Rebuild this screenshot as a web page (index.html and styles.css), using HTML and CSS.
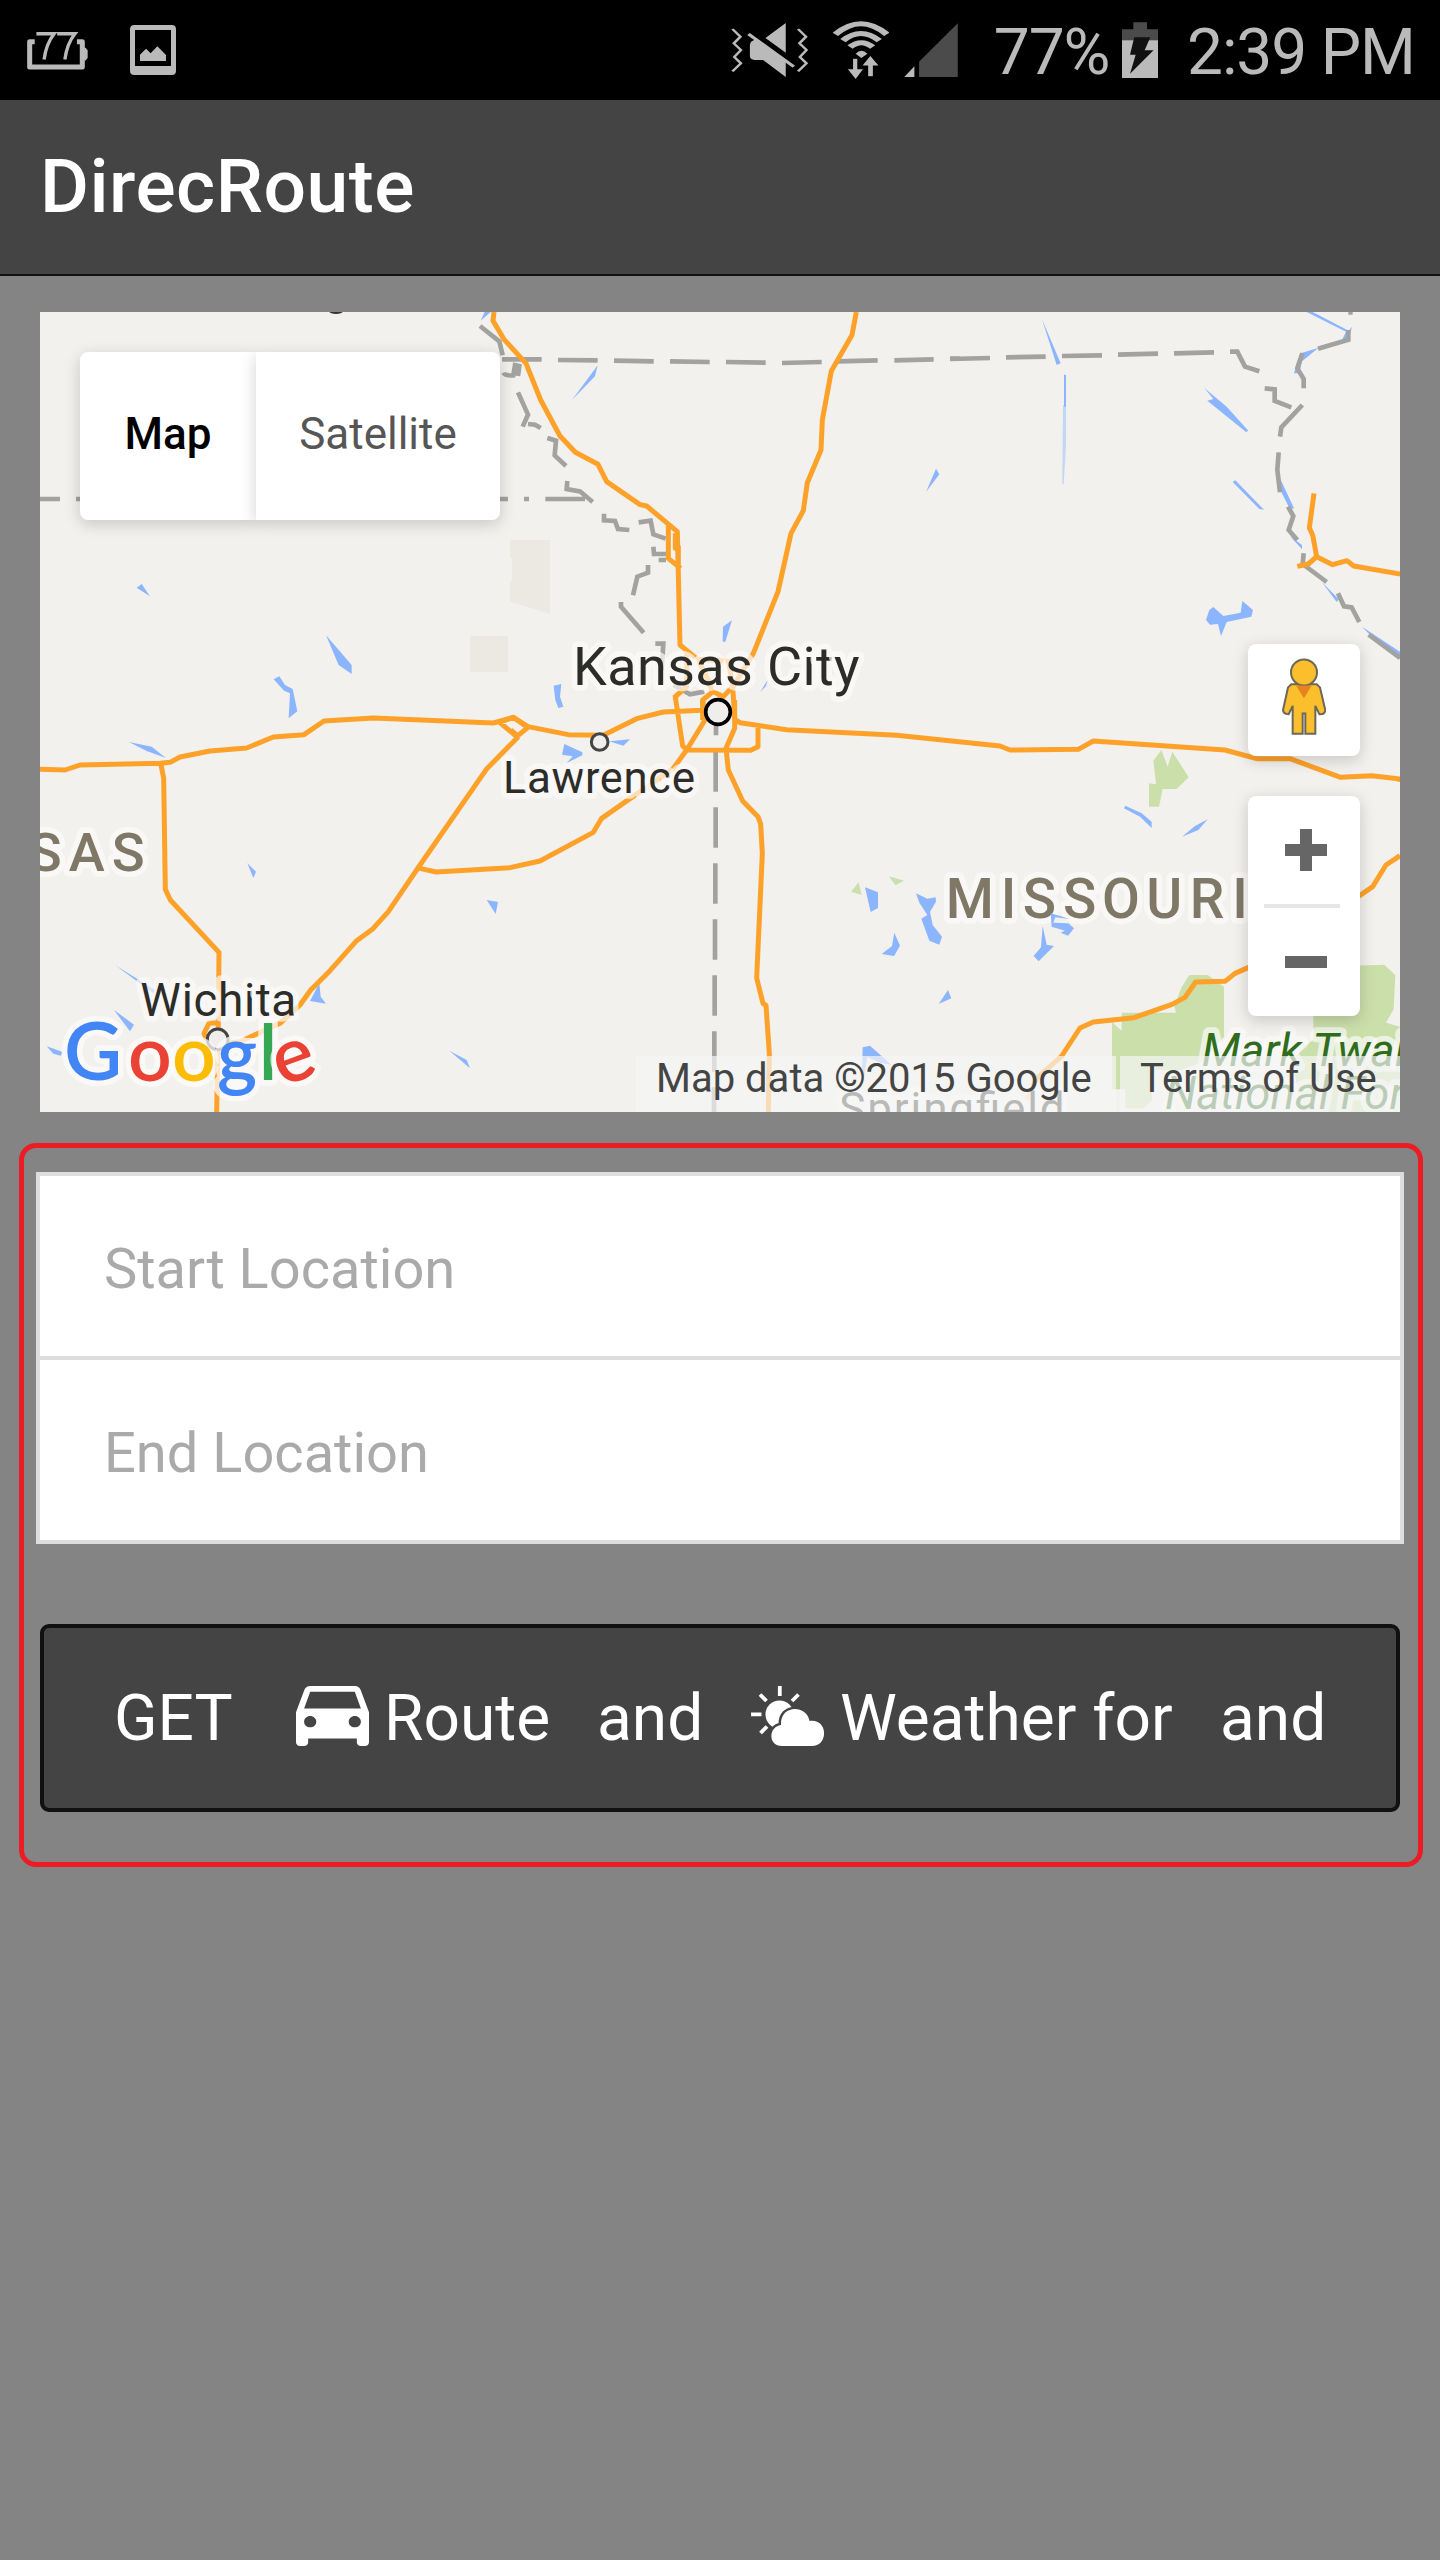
FILE: index.html
```html
<!DOCTYPE html>
<html lang="en">
<head>
<meta charset="utf-8">
<title>DirecRoute</title>
<link rel="stylesheet" href="styles.css">
</head>
<body>
<div class="status">
  <svg class="ic-pct" viewBox="80 92 182 116"><path d="M103 124H88V199H245V124H229" fill="none" stroke="#bababa" stroke-width="15" stroke-linejoin="round"/><path d="M250 142h5l6 8v22l-6 8h-5z" fill="#bababa"/><path d="M108 100H161Q137 130 131 177M170 100H223Q199 130 193 177" fill="none" stroke="#bababa" stroke-width="10"/></svg>
  <svg class="ic-img" viewBox="390 75 138 150"><path fill="#bababa" fill-rule="evenodd" d="M403 75H515Q528 75 528 88V212Q528 225 515 225H403Q390 225 390 212V88Q390 75 403 75ZM405 90V198H513V90Z"/><path fill="#bababa" d="M420 183V164L438 146L452 160L472 139L498 165V183Z"/></svg>
  <svg class="ic-mute" viewBox="66 66 164 166" preserveAspectRatio="none"><g fill="none" stroke="#bababa" stroke-width="6"><path d="M69 87L86 110L72 130L87 150L73 171L87 190L69 214M208 87L225 110L211 130L226 150L212 171L226 190L208 214"/></g><path fill="#bababa" d="M182 69V158L139 114ZM108 126L118 117L182 182V231L134 180H116Q106 178 106 168V135Z"/><path d="M103 102L199 200" stroke="#bababa" stroke-width="8"/></svg>
  <svg class="ic-wifi" viewBox="282 58 118 180" preserveAspectRatio="none"><g fill="none" stroke="#bababa" stroke-width="15"><path d="M287 101Q341 37 396 101"/><path d="M303 120Q341 77 380 120"/><path d="M318 139Q342 113 366 139"/></g><path fill="#bababa" d="M330 159Q342 142 355 159L342 172Z"/><path fill="#bababa" stroke="#000" stroke-width="3" d="M323 173H335V204H348L330 238L311 204H323ZM355 228H368V196H381L361 163L342 196H355Z"/></svg>
  <svg class="ic-signal" viewBox="432 68 116 164" preserveAspectRatio="none"><path fill="#4b4b4b" d="M546 69V231H464V184Z"/><path fill="#bababa" d="M454 198V231H432Z"/></svg>
  <span class="status-text pct">77%</span>
  <svg class="ic-batt" viewBox="896 62 77 170" preserveAspectRatio="none"><path fill="#4b4b4b" d="M920 63H949V84H973V118H896V84H920Z"/><path fill="#bababa" d="M896 117H973V231H896Z"/><path fill="#111" d="M922 108H956L944 147H963L913 217L925 160H913Z"/></svg>
  <span class="status-text clock">2:39 PM</span>
</div>
<header class="header"><h1>DirecRoute</h1></header>
<main class="content">
  <section class="map">
    <svg class="map-canvas" viewBox="120 936 4080 2400">
      <!-- land cover -->
      <g fill="#ebe9e1"><path d="M1530 1620h120v222l-120-37v-60l6-4v-66l-6-4zM1410 1908h114v108h-114z"/></g>
      <g fill="#cbdfab" transform="translate(2820 2100)">
        <path d="M664 150L683 200L697 155L746 232L710 267H668L657 320H627V250L648 253L640 182Z"/>
        <path d="M748 825H803L852 860V1010L780 1090L720 1110H636V1200L610 1225H556V1168H516V967L545 992V938H708L703 918L725 862Z"/>
        <path d="M1240 797L1333 794L1366 826L1361 928L1338 968L1380 980V1236H1080L1060 1080L1090 1040L1120 1020V940Z"/>
      </g>
      <g fill="#cbdfab" transform="translate(1380 2100)"><path d="M1173 575L1196 547L1205 585ZM1287 529L1332 542L1306 556Z"/></g>
      <!-- lakes and rivers -->
      <g fill="#8cb5ff">
        <path transform="translate(0 900)" d="M410 863L425 852L450 889ZM978 1006L1055 1095V1122L1016 1095ZM821 1138L838 1129L855 1155L878 1167L892 1234L866 1255L870 1180L852 1172Z"/>
        <path transform="translate(1380 900)" d="M62 62L74 36H92ZM336 300L413 196L405 229ZM1398 576L1428 506L1438 523ZM789 980L816 961L796 1025H788ZM281 1157L304 1152L300 1190L310 1220L295 1224L286 1200ZM900 1177L923 1140L918 1158Z"/>
        <path transform="translate(2820 900)" d="M306 58L362 190L350 195ZM793 264L860 320L925 392L918 396L802 302L820 297ZM878 546L886 541L972 629L958 627ZM1100 36H1118L1226 92L1236 80L1226 120L1205 122L1218 95ZM1082 160L1136 143L1086 184L1078 220H1062L1070 190ZM1020 535L1062 625L1050 628L1022 572ZM1050 709L1086 735V748ZM1145 845L1196 898L1190 906ZM1266 980L1380 1055V1078L1300 1015ZM808 930L820 921L850 948L902 938L907 903L939 930L934 950L860 966L843 1008L834 972L810 974L798 960Z"/>
        <path transform="translate(2820 900)" d="M372 224H378V320H372Z"/>
        <path transform="translate(2820 900)" opacity=".45" d="M369 315H378V435L371 552H367Z"/>
        <path transform="translate(0 2100)" d="M387 126L455 140L498 174L440 153ZM742 490L768 515L760 534ZM1460 600L1494 606L1487 642ZM342 930L402 974L390 994ZM345 795L465 870L460 880ZM140 1039L188 1056L182 1067L160 1061ZM958 850L962 890L978 911L930 903ZM1348 1052L1400 1080L1410 1105Z"/>
        <path transform="translate(1380 2100)" d="M313 132L367 157V166L320 189L338 169L306 164ZM448 124L510 118L490 137ZM1215 562L1254 577V624L1232 636ZM1368 580L1402 596L1427 592L1428 605L1410 635L1418 675L1446 710L1438 734L1408 722L1384 656L1402 645L1378 608ZM1303 698L1320 737L1302 768L1265 762L1296 738ZM1464 870L1474 895L1436 912ZM1208 1042L1230 1037L1295 1095L1260 1088L1222 1070L1212 1130L1206 1110Z"/>
        <path transform="translate(2820 2100)" d="M552 325L556 317L605 340L635 365V384L600 350ZM726 410L765 378L803 358L775 390ZM308 678L320 734L342 738L296 784L281 768L303 742Z"/>
      </g>
      <!-- state borders -->
      <g fill="none" stroke="#a2a2a0" stroke-width="14">
        <path transform="translate(0 900)" d="M120 597H180M228 597H250"/>
        <path transform="translate(1380 900)" d="M60 78L118 124L128 166M126 178H245M294 180L413 181M462 182L581 184M630 184L749 186M798 186L917 188M966 189L1085 186M1134 184L1253 181M1303 181L1421 178M1470 176H1500M131 218Q134 228 160 226L165 195L178 198L174 228M174 277L204 344L188 380M204 372L225 374L242 384M262 414L288 422L284 466L318 498M322 543L320 567L360 574L398 606M120 597H144M192 597H207M256 597H375M432 641V661L465 663L474 687L508 690M536 667L572 662L580 703L617 716M580 740L582 762H620M596 780H618M564 795V818L532 830L519 886M483 906V920L551 998M586 1031H610L605 1110M640 1155L690 1183L733 1175"/>
        <path transform="translate(2820 900)" d="M30 177L150 174M198 172L317 170M366 168L486 166M534 164L654 161M702 160L822 157M870 155H892L915 200L958 214M974 265L1004 268V303L1054 322M1087 315L1024 382L1020 410M1016 457L1012 510L1020 577M1091 265V237L1072 205L1087 160M1134 146L1225 119V90M1225 37H1238M1044 620L1060 648L1046 690L1072 720M1091 760L1088 792L1160 846M1194 880L1212 919L1235 922L1258 966M1286 1004L1380 1074"/>
        <path transform="translate(1380 2100)" d="M768 70V106M767 155V275M767 322V443M766 490V611M765 658V779M764 826V947M763 994V1115M762 1162V1236"/>
      </g>
      <!-- interstates -->
      <g fill="none" stroke="#fda129" stroke-width="15" stroke-linejoin="round">
        <path transform="translate(1380 900)" d="M102 36L99 62L132 118L198 190L242 300L300 408L346 457L414 493L440 545L540 614L560 618L652 695L660 1035L713 1078L806 1084L818 1160L790 1190L755 1172L745 1140L713 1078M625 678V775L662 805M646 700V745L655 740V800M1189 36L1176 105L1114 213L1087 360L1083 450L1042 548L1030 632L993 700L954 875L880 1060L818 1162M680 1060V1160L648 1188L646 1200M755 1178L728 1200V1260M818 1160L824 1250"/>
        <path transform="translate(2820 900)" d="M1122 580L1108 684L1118 705L1130 770L1105 792L1072 799M1130 770L1178 794L1221 782L1241 798L1385 823"/>
        <path transform="translate(0 2100)" d="M118 208L195 210L240 195L482 190L510 187L540 171L630 153L740 144L820 111L912 104L972 63L1120 54L1480 69L1540 52L1582 82M482 190L491 235L496 568L511 600L657 757L655 970L650 1236M1555 110L1459 208L1260 495L1165 635L1117 688L1068 724L990 812L932 870L900 915L840 970L720 1025L680 1030M1260 505L1308 516L1530 503L1620 483L1780 397L1805 355L2020 205L2060 150M655 970L628 968L612 1000L620 1020"/>
        <path transform="translate(1380 2100)" d="M118 66L170 110L204 82M120 66L160 52L204 80L325 104L430 106L530 56L610 36L740 30M728 0L735 60L680 150M645 -15L668 138L682 150L872 151L894 140V80M824 0V85L798 145L805 210L848 303L894 350L902 372L907 460L890 834L909 910L918 916L928 1060L925 1236M820 55L840 68L980 89L1310 106L1620 138L1650 150L1855 148L1900 123L2295 150L2390 176H2490L2642 232L2736 227L2820 237M152 90L170 105"/>
        <path transform="translate(2820 2100)" d="M1380 236V245M1380 467L1338 495L1298 560L1240 600L1110 740L924 803L885 820L855 844L767 846L735 892L696 913L582 953L460 966L420 984L365 1068L290 1135L260 1200"/>
      </g>
      <!-- city markers and place labels -->
      <g class="city">
        <ellipse cx="1008" cy="934" rx="20" ry="8" fill="#333"/>
        <circle cx="2154" cy="2136" r="37" fill="#efeeec" stroke="#000" stroke-width="11"/>
        <circle cx="1799" cy="2226" r="25" fill="#efeeec" stroke="#444" stroke-width="9"/>
        <circle cx="653" cy="3118" r="31" fill="#efeeec" stroke="#444" stroke-width="9"/>
        <text x="1719" y="2055" font-size="162" textLength="860">Kansas City</text>
        <text x="1509" y="2380" font-size="132" textLength="576">Lawrence</text>
        <text x="421" y="3048" font-size="138" textLength="468">Wichita</text>
        <text x="2518" y="3372" font-size="132" textLength="676">Springfield</text>
      </g>
      <g class="state">
        <text x="86" y="2613" font-size="163">S</text><text x="206" y="2613" font-size="163">A</text><text x="335" y="2613" font-size="163">S</text>
        <text y="2753" font-size="165" x="2837 3002 3068 3189 3306 3439 3569 3697">MISSOURI</text>
      </g>
      <path transform="translate(2820 2100)" fill="#8cb5ff" d="M332 640L390 657L346 652L340 668L385 670L402 685L384 707L362 698L375 692L335 680Z"/>
      <g class="park">
        <text x="3605" y="3197" font-size="137">Mark Twain</text>
        <text x="3495" y="3328" font-size="136">National Forest</text>
      </g>
      <g class="logo" font-size="230">
        <text class="blue" x="192" y="3240" font-size="240">G</text><text class="red" x="384" y="3243">o</text><text class="yellow" x="516" y="3243">o</text><text class="blue" x="651" y="3243">g</text><text class="green" x="776" y="3240">l</text><text class="red" x="822" y="3243" transform="rotate(-20 884 3186)">e</text>
      </g>
    </svg>
    <div class="map-types"><button class="type active">Map</button><button class="type">Satellite</button></div>
    <div class="map-tools">
      <div class="pegman"><svg viewBox="1026 1072 132 230"><g fill="#fbbf2d" stroke="#6c6858" stroke-width="6"><path d="M1054 1150H1130L1140 1160L1156 1228Q1154 1242 1138 1240L1126 1215V1299H1096V1238H1088V1299H1058V1215L1046 1240Q1030 1240 1029 1228L1044 1160Z"/><circle cx="1092" cy="1115" r="39"/></g><path fill="#e6831c" d="M1068 1154H1115L1092 1192Z"/></svg></div>
      <div class="zoom"><svg viewBox="0 0 112 220"><path fill="#666" d="M52 33h12v15h15v12H64v15H52V60H37V48h15zM37 160h42v12H37z"/><path fill="#e6e6e6" d="M16 108h76v4H16z"/></svg></div>
    </div>
    <div class="credits"><span class="credit data">Map data ©2015 Google</span><span class="credit terms">Terms of Use</span></div>
  </section>
  <section class="panel">
    <div class="fields"><input type="text" placeholder="Start Location"><input type="text" placeholder="End Location"></div>
    <button class="get">
      <span class="w-get">GET</span>
      <svg class="ic-car" viewBox="3 5 18 16" preserveAspectRatio="none"><path fill="#fff" d="M18.92 6.01C18.72 5.42 18.16 5 17.5 5h-11c-.66 0-1.21.42-1.42 1.01L3 12v8c0 .55.45 1 1 1h1c.55 0 1-.45 1-1v-1h12v1c0 .55.45 1 1 1h1c.55 0 1-.45 1-1v-8l-2.08-5.99zM6.5 16C5.67 16 5 15.330 5 14.500S5.670 13 6.500 13 8 13.670 8 14.500 7.330 16 6.500 16zM17.500 16C16.670 16 16 15.330 16 14.500S16.670 13 17.500 13 19 13.670 19 14.500 18.330 16 17.500 16zM5 11l1.500-4.500h11L19 11H5z"/></svg>
      <span class="w-route">Route</span>
      <span class="w-and">and</span>
      <svg class="ic-sun" viewBox="0 0 73 60"><circle cx="28.500" cy="28.500" r="14" fill="#fff"/><path stroke="#fff" stroke-width="3.800" d="M28.800 0V10M0 28.300H10.500M9 8.500L15.500 15M47.500 8.500L41 15M9.500 47L16 40.500"/><path fill="#fff" stroke="#444" stroke-width="5" paint-order="stroke" d="M31 60C17 60 17 41 30 39C29 18 56 19 58.500 35C77 32 78 60 61 60Z"/></svg>
      <span class="w-weather">Weather for</span>
      <span class="w-and2">and</span>
    </button>
  </section>
</main>
</body>
</html>
```
FILE: styles.css
```css
* { box-sizing: border-box; }
body { margin: 0; width: 1440px; height: 2560px; background: #848484; font-family: Roboto, "Liberation Sans", sans-serif; overflow: hidden; }
svg { display: block; flex: none; }
button { font-family: inherit; }

.status { height: 100px; background: #000; display: flex; align-items: center; }
.status-text { color: #bababa; font-size: 64px; line-height: 100px; white-space: nowrap; padding-top: 6px; letter-spacing: -1.1px; }
.ic-pct { width: 61px; height: 39px; margin-left: 27px; }
.ic-img { width: 46px; height: 50px; margin-left: 42px; }
.ic-mute { width: 77.400px; height: 55.300px; margin-left: 555px; }
.ic-wifi { width: 55.700px; height: 60px; margin-left: 25px; }
.ic-signal { width: 54.700px; height: 54.700px; margin-left: 15px; }
.pct { width: 128px; margin-left: 35px; }
.ic-batt { width: 36.300px; height: 56.700px; }
.clock { margin-left: 29px; }

.header { height: 176px; background: #444; border-bottom: 2px solid #111; padding: 0 0 2px 40px; display: flex; align-items: center; }
.header h1 { margin: 0; color: #fff; font-size: 75px; font-weight: 500; line-height: 88px; letter-spacing: .5px; }

.content { padding-top: 36px; }
.map { position: relative; width: 1360px; height: 800px; margin: 0 40px; background: #f2f1ed; overflow: hidden; }
.map-canvas { width: 1360px; height: 800px; font-family: Roboto, sans-serif; }
.city text, .park text, .state text { stroke: rgba(252, 251, 250, .7); stroke-width: 34px; stroke-linejoin: round; paint-order: stroke; }
.city text { fill: #2c2c29; }
.state text { fill: #7f7867; font-weight: 500; }
.park text { fill: #2f6c1e; font-style: italic; }
.logo { font-family: Lato, sans-serif; font-weight: 600; }
.logo text { stroke: rgba(252, 251, 250, .75); stroke-width: 34px; stroke-linejoin: round; paint-order: stroke; }
.blue { fill: #4285f4; }
.red { fill: #ea4335; }
.yellow { fill: #fbbc05; }
.green { fill: #34a853; }

.map-types { position: absolute; left: 40px; top: 40px; height: 168px; display: flex; }
.type { border: 0; margin: 0; padding: 0 0 5px; background: #fff; font-size: 44px; color: #565656; width: 244px; border-radius: 0 8px 8px 0; box-shadow: 0 4px 16px rgba(0, 0, 0, .18); }
.type.active { width: 176px; color: #000; font-weight: 500; border-radius: 8px 0 0 8px; }
.map-tools { position: absolute; right: 40px; top: 332px; width: 112px; display: flex; flex-direction: column; gap: 40px; }
.pegman, .zoom { background: #fff; border-radius: 8px; box-shadow: 0 4px 16px rgba(0, 0, 0, .18); }
.pegman { height: 112px; padding: 14px 34px; }
.pegman svg { width: 44px; height: 77px; }
.zoom { height: 220px; }
.credits { position: absolute; right: 0; bottom: 0; height: 56px; display: flex; gap: 4px; }
.credit { background: rgba(245, 245, 245, .7); color: #444; font-size: 40px; line-height: 46px; white-space: nowrap; }
.data { width: 480px; padding-left: 20px; }
.terms { width: 280px; padding-left: 20px; }

.panel { width: 1404px; height: 724px; margin: 31px 0 0 19px; border: 5px solid #ed1c24; border-radius: 17px; padding: 24px 14px 0 12px; }
.fields { width: 1368px; border: 4px solid #ddd; background: #ddd; display: flex; flex-direction: column; gap: 4px; }
.fields input { height: 180px; width: 100%; border: 0; border-radius: 0; padding: 6px 0 0 64px; background: #fff; font: 56px Roboto, sans-serif; }
.fields input::placeholder { color: #aaa; opacity: 1; }
.get { width: 1360px; height: 188px; margin: 80px 4px 0; padding: 0; border: 4px solid #111; border-radius: 9px; background: #444; color: #fff; font-size: 64px; display: flex; align-items: center; text-align: left; white-space: nowrap; }
.w-get { width: 182px; margin-left: 70px; }
.ic-car { width: 73px; height: 60px; margin-top: -4px; }
.w-route { margin-left: 15px; width: 213px; }
.w-and { width: 154px; }
.ic-sun { width: 73px; height: 60px; margin-top: -4px; }
.w-weather { margin-left: 16px; width: 380px; }
```
